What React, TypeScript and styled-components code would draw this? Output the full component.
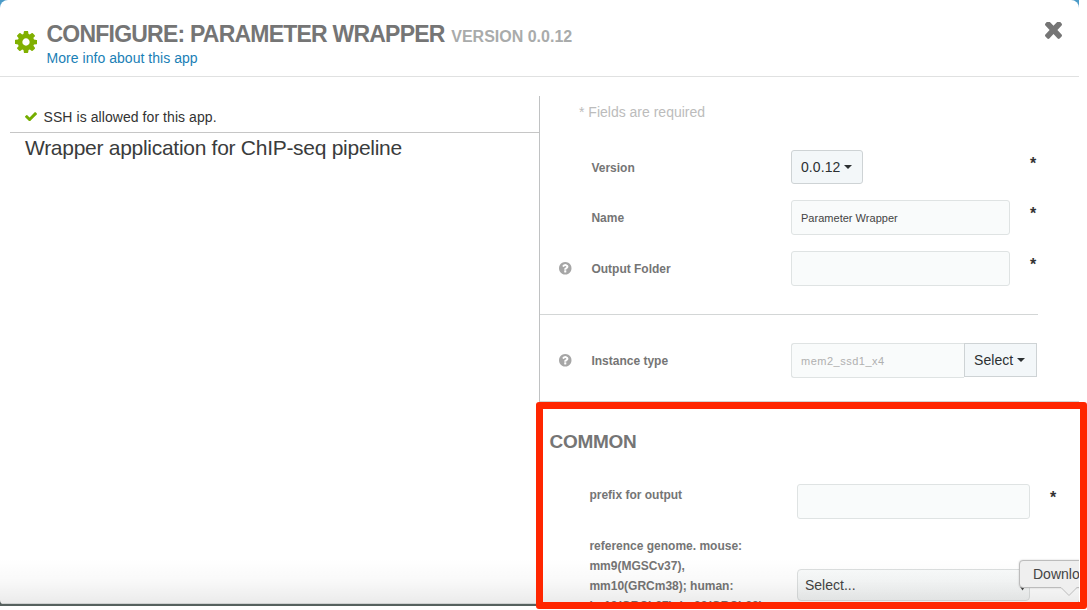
import React from "react";
import styled, { createGlobalStyle } from "styled-components";

const GlobalStyle = createGlobalStyle`
  * { box-sizing: border-box; }
  body {
    margin: 0;
    background: #fff;
    font-family: "Liberation Sans", Arial, sans-serif;
    font-size: 14px;
    color: #333;
    overflow: hidden;
  }
`;

const Page = styled.div`
  position: relative;
  width: 1087px;
  height: 610px;
  overflow: hidden;
`;

const Backdrop = styled.div`
  width: 1079px;
  height: 606px;
  background: linear-gradient(#4b9bc8 0, #4b9bc8 40px, #56615e 41px);
`;

const Dialog = styled.div`
  position: relative;
  width: 1079px;
  height: 604px;
  overflow: hidden;
  background: #fff;
  border-radius: 8px 8px 4px 4px;
  display: flex;
  flex-direction: column;
`;

const Header = styled.header`
  flex: none;
  height: 77px;
  padding: 22px 17px 0 15px;
  border-bottom: 1px solid #e0e1e1;
  display: flex;
  align-items: flex-start;
`;

const GearBox = styled.span`
  margin-top: 9px;
  width: 31.5px;
  line-height: 0;
`;

const Heading = styled.div`
  flex: 1;
`;

const Title = styled.h1`
  margin: -1px 0 0;
  font-size: 23px;
  line-height: 26px;
  letter-spacing: -0.78px;
  color: #757575;
  white-space: nowrap;
`;

const TitleVersion = styled.small`
  margin-left: 1px;
  font-size: 16px;
  letter-spacing: 0;
  color: #a9abab;
`;

const InfoLink = styled.a`
  display: block;
  margin-top: -1px;
  line-height: 18px;
  letter-spacing: 0.04px;
  color: #1a80b6;
`;

const Columns = styled.div`
  flex: 1;
  display: flex;
  padding: 19px 0 0 10px;
`;

const Summary = styled.section`
  width: 529px;
`;

const SshNotice = styled.div`
  height: 37px;
  padding: 5px 0 0 15px;
  border-bottom: 1px solid #c6c6c6;
  display: flex;
  align-items: center;
  gap: 6.5px;
  letter-spacing: 0.07px;
`;

const Description = styled.p`
  margin: 2px 0 0 15px;
  font-size: 21px;
  line-height: 26px;
  letter-spacing: -0.28px;
  color: #3a3c3c;
  white-space: nowrap;
`;

const Form = styled.section`
  width: 540px;
  height: 509px;
  border-left: 1px solid #c0c2c3;
`;

const RequiredNote = styled.div`
  height: 54px;
  padding: 7px 0 0 39px;
  line-height: 18px;
  color: #bcbcbc;
`;

const Field = styled.div<{ $gap?: number }>`
  display: grid;
  grid-template-columns: 51px 200px 219px 28px;
  align-items: start;
  height: 35px;
  margin-bottom: ${(p) => p.$gap ?? 16}px;
`;

const CommonField = styled(Field)`
  grid-template-columns: 49px 208px 233px 30px;
  height: auto;
`;

const HelpSlot = styled.span`
  padding: 11px 0 0 19px;
  line-height: 0;
`;

const Label = styled.label<{ $top?: number }>`
  padding: ${(p) => p.$top ?? 8}px 0 0 0.4px;
  font-size: 12px;
  font-weight: bold;
  line-height: 20px;
  color: #757575;
  white-space: nowrap;
`;

const Input = styled.div<{ $muted?: boolean }>`
  height: 35px;
  padding: 0 9px;
  border: 1px solid #dfe3e3;
  border-radius: 3px;
  background: #f9fbfb;
  font-size: 11px;
  line-height: 34px;
  letter-spacing: ${(p) => (p.$muted ? "0.5px" : "0.02px")};
  color: ${(p) => (p.$muted ? "#b0b0b0" : "#444")};
`;

const Button = styled.button`
  height: 34px;
  width: 72px;
  padding: 0 0 0 9px;
  border: 1px solid #ced3d5;
  border-radius: 3px;
  background: #f3f7f9;
  color: #2c3032;
  font: 14px "Liberation Sans", Arial, sans-serif;
  letter-spacing: 0.07px;
  display: flex;
  align-items: center;
  gap: 3.5px;
`;

const Caret = styled.i`
  border: 4.5px solid transparent;
  border-top-color: currentColor;
  border-bottom: 0;
`;

const InputGroup = styled.div`
  display: flex;
  width: 246px;

  ${Input} {
    flex: 1;
    border-right: 0;
    border-radius: 3px 0 0 3px;
  }

  ${Button} {
    width: 73px;
    border-radius: 0;
  }
`;

const Star = styled.span`
  padding: 4px 0 0 20px;
  font-size: 16px;
  font-weight: bold;
  line-height: 20px;
  color: #333;
`;

const Divider = styled.hr`
  width: 498px;
  margin: 0 0 28px;
  border: 0;
  border-top: 1px solid #d3d6d6;
`;

const Group = styled.div`
  margin-top: 23px;
  border-top: 1px solid #d3d6d6;
`;

const GroupTitle = styled.h2`
  margin: 0 0 31px;
  padding: 28px 0 0 9.5px;
  font-size: 19px;
  line-height: 23px;
  letter-spacing: -0.3px;
  color: #757575;
`;

const Select = styled.div`
  height: 32px;
  margin-top: 34px;
  padding: 0 3px 0 7px;
  border: 1px solid #dcdfdf;
  border-radius: 4px;
  background: linear-gradient(#f9fbfb, #f3f5f5);
  color: #444;
  line-height: 31px;
  display: flex;
  align-items: center;
  justify-content: space-between;
`;

const BottomFade = styled.div`
  position: absolute;
  left: 0;
  right: 0;
  bottom: 0;
  height: 46px;
  background: linear-gradient(rgba(0, 0, 0, 0), rgba(0, 0, 0, 0.022) 50%, rgba(0, 0, 0, 0.08));
  border-bottom: 1px solid #cfd1d1;
`;

const Tooltip = styled.div`
  position: absolute;
  left: 1019px;
  top: 560px;
  width: 68px;
  height: 28px;
  padding-left: 13px;
  border: 1px solid #bcbcbc;
  border-radius: 4px;
  background: #efefef;
  color: #444;
  line-height: 27px;
  box-shadow: 0 0 2px rgba(0, 0, 0, 0.2);
  white-space: nowrap;
`;

const TooltipTail = styled.svg`
  position: absolute;
  left: 40px;
  top: 25px;
`;

const Annotation = styled.div`
  position: absolute;
  left: 536px;
  top: 402px;
  width: 550.5px;
  height: 207px;
  border: 7px solid #ff2600;
  border-radius: 3px;
`;

const OutsideStrip = styled.div`
  position: absolute;
  left: 1079px;
  top: 409px;
  width: 8px;
  height: 193px;
  background: #fff;
`;

const GearIcon = () => (
  <svg width="22" height="22" viewBox="0 128 1536 1536" fill="#80b000">
    <path d="M1024 896q0-106-75-181t-181-75-181 75-75 181 75 181 181 75 181-75 75-181zm512-109v222q0 12-8 23t-20 13l-185 28q-19 54-39 91 35 50 107 138 10 12 10 25t-9 23q-27 37-99 108t-94 71q-12 0-26-9l-138-108q-44 23-91 38-16 136-29 186-7 28-36 28h-222q-14 0-24.500-8.500t-11.500-21.500l-28-184q-49-16-90-37l-141 107q-10 9-25 9-14 0-25-11-126-114-165-168-7-10-7-23 0-12 8-23 15-21 51-66.500t54-70.500q-27-50-41-99l-183-27q-13-2-21-12.500t-8-23.500v-222q0-12 8-23t19-13l186-28q14-46 39-92-40-57-107-138-10-12-10-24 0-10 9-23 26-36 98.500-107.500t94.500-71.500q13 0 26 10l138 107q44-23 91-38 16-136 29-186 7-28 36-28h222q14 0 24.500 8.500t11.500 21.500l28 184q49 16 90 37l142-107q9-9 24-9 13 0 25 10 129 119 165 170 7 8 7 22 0 12-8 23-15 21-51 66.500t-54 70.500q26 50 41 98l183 28q13 2 21 12.500t8 23.500z" />
  </svg>
);

const CloseIcon = () => (
  <svg width="17" height="17" viewBox="302 434 1188 1120" preserveAspectRatio="none" fill="#757575">
    <path d="M1490 1322q0 40-28 68l-136 136q-28 28-68 28t-68-28l-294-294-294 294q-28 28-68 28t-68-28l-136-136q-28-28-28-68t28-68l294-294-294-294q-28-28-28-68t28-68l136-136q28-28 68-28t68 28l294 294 294-294q28-28 68-28t68 28l136 136q28 28 28 68t-28 68l-294 294 294 294q28 28 28 68z" />
  </svg>
);

const CheckIcon = () => (
  <svg width="12" height="9.500" viewBox="121 334 1550 1188" fill="#74ad00">
    <path d="M1671 566q0 40-28 68l-724 724-136 136q-28 28-68 28t-68-28l-136-136-362-362q-28-28-28-68t28-68l136-136q28-28 68-28t68 28l294 295 656-657q28-28 68-28t68 28l136 136q28 28 28 68z" />
  </svg>
);

const HelpIcon = () => (
  <svg width="12.500" height="12.500" viewBox="128 128 1536 1536" fill="#a6a6a6">
    <path d="M1024 1376v-192q0-14-9-23t-23-9h-192q-14 0-23 9t-9 23v192q0 14 9 23t23 9h192q14 0 23-9t9-23zm256-672q0-88-55.500-163t-138.500-116-170-41q-243 0-371 213-15 24 8 42l132 100q7 6 19 6 16 0 25-12 53-68 86-92 34-24 86-24 48 0 85.500 26t37.500 59q0 38-20 61t-68 45q-63 28-115.500 86.500t-52.500 125.500v36q0 14 9 23t23 9h192q14 0 23-9t9-23q0-19 21.500-49.500t54.500-49.500q32-18 49-28.500t46-35 44.500-48 28-60.500 12.500-81zm384 192q0 209-103 385.500t-279.500 279.500-385.500 103-385.500-103-279.500-279.500-103-385.500 103-385.500 279.500-279.500 385.500-103 385.500 103 279.500 279.500 103 385.500z" />
  </svg>
);

const SelectArrows = () => (
  <svg width="7" height="11" viewBox="0 0 7 11" fill="#444">
    <path d="M3.500 0L6 4H1zM1 6.500h5l-2.500 4z" />
  </svg>
);

export default function App() {
  return (
    <Page>
      <GlobalStyle />
      <Backdrop>
        <Dialog>
          <Header>
            <GearBox><GearIcon /></GearBox>
            <Heading>
              <Title>
                CONFIGURE: PARAMETER WRAPPER <TitleVersion>VERSION 0.0.12</TitleVersion>
              </Title>
              <InfoLink>More info about this app</InfoLink>
            </Heading>
            <CloseIcon />
          </Header>
          <Columns>
            <Summary>
              <SshNotice>
                <CheckIcon />
                <span>SSH is allowed for this app.</span>
              </SshNotice>
              <Description>Wrapper application for ChIP-seq pipeline</Description>
            </Summary>
            <Form>
              <RequiredNote>* Fields are required</RequiredNote>
              <Field $gap={15}>
                <HelpSlot />
                <Label>Version</Label>
                <Button>0.0.12<Caret /></Button>
                <Star>*</Star>
              </Field>
              <Field>
                <HelpSlot />
                <Label>Name</Label>
                <Input>Parameter Wrapper</Input>
                <Star>*</Star>
              </Field>
              <Field $gap={28}>
                <HelpSlot><HelpIcon /></HelpSlot>
                <Label>Output Folder</Label>
                <Input />
                <Star>*</Star>
              </Field>
              <Divider />
              <Field $gap={0}>
                <HelpSlot><HelpIcon /></HelpSlot>
                <Label>Instance type</Label>
                <InputGroup>
                  <Input $muted>mem2_ssd1_x4</Input>
                  <Button>Select<Caret /></Button>
                </InputGroup>
              </Field>
              <Group>
                <GroupTitle>COMMON</GroupTitle>
                <CommonField>
                  <span />
                  <Label $top={1}>prefix for output</Label>
                  <Input />
                  <Star>*</Star>
                </CommonField>
                <CommonField>
                  <span />
                  <Label $top={1}>
                    reference genome. mouse:<br />
                    mm9(MGSCv37),<br />
                    mm10(GRCm38); human:<br />
                    hg19(GRCh37), hg38(GRCh38)
                  </Label>
                  <Select>Select...<SelectArrows /></Select>
                </CommonField>
              </Group>
            </Form>
          </Columns>
          <BottomFade />
        </Dialog>
      </Backdrop>
      <Tooltip>
        Download
        <TooltipTail width="18" height="11" viewBox="0 0 18 11">
          <path d="M1 0H17V1L9 9.500 1 1.500z" fill="#efefef" />
          <path d="M1 1.500L9 9.500 17 1.500" fill="none" stroke="#bcbcbc" />
        </TooltipTail>
      </Tooltip>
      <OutsideStrip />
      <Annotation />
    </Page>
  );
}
